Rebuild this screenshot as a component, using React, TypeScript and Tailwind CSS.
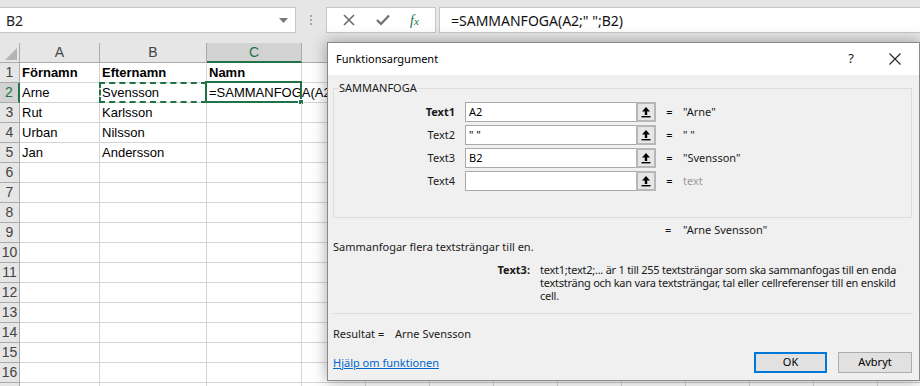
import React from "react";

const cellFont = { fontFamily: '"Liberation Sans", Arial, sans-serif' };
const uiFont = { fontFamily: '"Noto Sans", "DejaVu Sans", sans-serif' };

const rows: [string, string][] = [
  ["Förnamn", "Efternamn"],
  ["Arne", "Svensson"],
  ["Rut", "Karlsson"],
  ["Urban", "Nilsson"],
  ["Jan", "Andersson"],
];

function UpArrow() {
  return (
    <svg width="10" height="12" viewBox="0 0 10 12">
      <path d="M5 1 L9 5.5 L6.2 5.5 L6.2 9 L3.8 9 L3.8 5.5 L1 5.5 Z" fill="#000" />
      <rect x="0.5" y="10" width="9" height="1.4" fill="#000" />
    </svg>
  );
}

function ArgRow({ label, bold, value, result, dim }: { label: string; bold?: boolean; value: string; result: string; dim?: boolean }) {
  return (
    <div className="flex items-center h-[20px] mb-[3px]">
      <div className={`w-[131px] shrink-0 text-right pr-[10px] text-[11px] text-[#1a1a1a] ${bold ? "font-bold" : ""}`}>{label}</div>
      <div className="w-[171px] shrink-0 h-[20px] bg-white border border-[#a9a9a9] border-r-0 flex items-center pl-[3px] text-[11px] text-black">{value}</div>
      <div className="w-[20px] shrink-0 h-[20px] border-2 border-[#b7b7b7] bg-[#e6e6e6] flex items-center justify-center">
        <UpArrow />
      </div>
      <div className="w-[27px] shrink-0 text-center text-[11px]">=</div>
      <div className={`text-[11px] ${dim ? "text-[#9a9a9a]" : "text-[#1a1a1a]"}`}>{result}</div>
    </div>
  );
}

export default function App() {
  const gridRows = Array.from({ length: 17 }, (_, i) => i + 1);
  const extraCols = Array.from({ length: 10 }, (_, i) => i);
  return (
    <div className="relative w-[920px] h-[386px] overflow-hidden bg-white" style={cellFont}>
      {/* Formula bar */}
      <div className="h-[43px] bg-[#e6e6e6] flex items-start pt-[7px]">
        <div className="w-[296px] shrink-0 h-[26px] bg-white border border-[#c6c6c6] border-l-0 flex items-center justify-between pl-[6px] pr-[7px]">
          <span className="text-[14px] text-[#222]" style={uiFont}>B2</span>
          <svg width="9" height="5" viewBox="0 0 9 5"><path d="M0 0 L9 0 L4.5 5 Z" fill="#777" /></svg>
        </div>
        <div className="w-[30px] shrink-0 h-[26px] flex flex-col items-center justify-center gap-[2px]">
          <span className="w-[2px] h-[2px] bg-[#aaa]" />
          <span className="w-[2px] h-[2px] bg-[#aaa]" />
          <span className="w-[2px] h-[2px] bg-[#aaa]" />
        </div>
        <div className="w-[110px] shrink-0 h-[26px] bg-white border border-[#c6c6c6] flex items-center justify-around px-[6px]">
          <svg width="12" height="12" viewBox="0 0 12 12"><path d="M1 1 L11 11 M11 1 L1 11" stroke="#6d6d6d" strokeWidth="1.6" /></svg>
          <svg width="14" height="12" viewBox="0 0 14 12"><path d="M1 6 L5 10 L13 1.5" stroke="#6d6d6d" strokeWidth="2.2" fill="none" /></svg>
          <span className="text-[14px] italic text-[#217346]" style={{ fontFamily: '"Liberation Serif", serif' }}>f<span className="text-[11px]">x</span></span>
        </div>
        <div className="ml-[3px] flex-1 h-[26px] bg-white border border-[#c6c6c6] border-r-0 flex items-center pl-[11px] text-[14px] text-[#111]" style={uiFont}>
          =SAMMANFOGA(A2;" ";B2)
        </div>
      </div>

      {/* Grid */}
      <div className="flex flex-col">
        <div className="flex h-[20px] bg-[#e6e6e6] text-[14px] text-[#444]">
          <div className="w-[20px] shrink-0 h-[20px] border-r border-b border-[#ababab] relative">
            <svg className="absolute right-[2px] bottom-[2px]" width="12" height="12" viewBox="0 0 12 12"><path d="M12 0 L12 12 L0 12 Z" fill="#b5b5b5" /></svg>
          </div>
          <div className="w-[80px] shrink-0 h-[20px] border-r border-b border-[#ababab] flex items-center justify-center">A</div>
          <div className="w-[107px] shrink-0 h-[20px] border-r border-b border-[#ababab] flex items-center justify-center">B</div>
          <div className="w-[95px] shrink-0 h-[20px] border-r border-b-2 border-r-[#ababab] border-b-[#217346] bg-[#d2d2d2] text-[#217346] flex items-center justify-center">C</div>
          {extraCols.map((c) => (
            <div key={c} className="w-[64px] shrink-0 h-[20px] border-r border-b border-[#ababab]" />
          ))}
        </div>
        {gridRows.map((r) => {
          const data = rows[r - 1];
          const sel = r === 2;
          return (
            <div key={r} className="flex h-[20px] text-[13px] text-black">
              <div className={`w-[20px] shrink-0 h-[20px] border-b border-[#ababab] flex items-center justify-center text-[14px] ${sel ? "bg-[#d2d2d2] border-r-2 border-r-[#217346] text-[#217346]" : "bg-[#e6e6e6] border-r text-[#444]"}`}>
                {r < 17 ? r : ""}
              </div>
              <div className={`w-[80px] shrink-0 h-[20px] border-r border-b border-[#d4d4d4] flex items-center pl-[2px] ${r === 1 ? "font-bold" : ""}`}>
                {data ? data[0] : ""}
              </div>
              <div className={`relative w-[107px] shrink-0 h-[20px] border-r border-b border-[#d4d4d4] flex items-center pl-[2px] ${r === 1 ? "font-bold" : ""}`}>
                {data ? data[1] : ""}
                {sel && <div className="absolute left-[-1px] top-[-1px] right-[-1px] bottom-[-1px] border-2 border-dashed border-[#217346]" />}
              </div>
              <div className={`relative w-[95px] shrink-0 h-[20px] border-r border-b border-[#d4d4d4] flex items-center pl-[2px] whitespace-nowrap ${r === 1 ? "font-bold" : ""}`}>
                {r === 1 ? "Namn" : sel ? "=SAMMANFOGA(A2;\" \";B2)" : ""}
                {sel && (
                  <div className="absolute left-[-2px] top-[-2px] right-[-1px] bottom-[-1px] border-2 border-[#217346]">
                    <div className="absolute right-[-4px] bottom-[-4px] w-[6px] h-[6px] bg-[#217346] border border-white" />
                  </div>
                )}
              </div>
              {extraCols.map((c) => (
                <div key={c} className="w-[64px] shrink-0 h-[20px] border-r border-b border-[#d4d4d4]" />
              ))}
            </div>
          );
        })}
      </div>

      {/* Dialog */}
      <div className="absolute left-[327px] top-[42px] w-[593px] h-[339px] bg-[#f0f0f0] border border-[#8a8a8a] shadow-[0_0_14px_rgba(0,0,0,0.35)] z-10 flex flex-col" style={uiFont}>
        <div className="h-[32px] bg-white flex items-center pl-[8px] shrink-0">
          <span className="text-[11px] text-black flex-1">Funktionsargument</span>
          <span className="text-[13px] text-[#222] w-[20px] text-center mr-[28px]">?</span>
          <svg className="mr-[18px]" width="12" height="12" viewBox="0 0 12 12"><path d="M0.5 0.5 L11.5 11.5 M11.5 0.5 L0.5 11.5" stroke="#222" strokeWidth="1.1" /></svg>
        </div>
        <div className="flex-1 flex flex-col px-[5px] pt-[13px]">
          <div className="relative border border-[#dcdcdc] h-[130px] w-[579px] pt-[13px]">
            <span className="absolute left-[4px] top-[-9px] bg-[#f0f0f0] px-[1px] text-[11px] text-[#1a1a1a] leading-[16px]">SAMMANFOGA</span>
            <ArgRow label="Text1" bold value="A2" result={'"Arne"'} />
            <ArgRow label="Text2" value={'" "'} result={'" "'} />
            <ArgRow label="Text3" value="B2" result={'"Svensson"'} />
            <ArgRow label="Text4" value="" result="text" dim />
          </div>
          <div className="flex h-[16px] mt-[4px] text-[11px] text-[#1a1a1a] leading-[16px]">
            <div className="w-[332px] shrink-0" />
            <div className="w-[18px] shrink-0">=</div>
            <div>"Arne Svensson"</div>
          </div>
          <div className="text-[11px] text-[#1a1a1a] mt-[1px] leading-[16px]">Sammanfogar flera textsträngar till en.</div>
          <div className="flex mt-[8px] text-[11px] text-[#1a1a1a] leading-[13px]">
            <div className="w-[207px] shrink-0 text-right pr-[10px] font-bold">Text3:</div>
            <div className="w-[372px] whitespace-nowrap tracking-[-0.25px]">
              text1;text2;... är 1 till 255 textsträngar som ska sammanfogas till en enda
              <br />
              textsträng och kan vara textsträngar, tal eller cellreferenser till en enskild
              <br />
              cell.
            </div>
          </div>
          <div className="mt-[11px] border-t border-[#dcdcdc] w-[580px]" />
          <div className="flex mt-[12px] text-[11px] text-[#1a1a1a] leading-[16px]">
            <span className="w-[62px] shrink-0">Resultat =</span>
            <span>Arne Svensson</span>
          </div>
          <div className="flex items-center justify-between mt-[10px] pr-[2px]">
            <a className="text-[11px] text-[#0066cc] underline leading-[16px]" href="#">Hjälp om funktionen</a>
            <div className="flex gap-[11px]">
              <button className="w-[73px] h-[21px] bg-[#e1e1e1] border-2 border-[#0078d7] text-[11px] text-black">OK</button>
              <button className="w-[74px] h-[21px] bg-[#e1e1e1] border border-[#adadad] text-[11px] text-black">Avbryt</button>
            </div>
          </div>
        </div>
      </div>
    </div>
  );
}
